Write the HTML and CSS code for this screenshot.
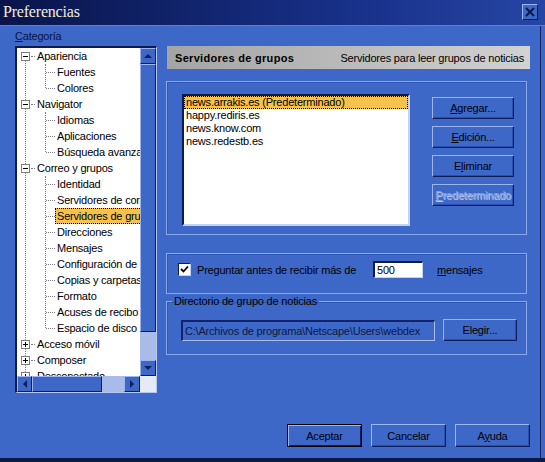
FILE: index.html
```html
<!DOCTYPE html>
<html>
  <head>
    <meta charset="utf-8">
    <title>Preferencias</title>
    <link rel="stylesheet" href="styles.css">
  </head>
  <body>
    <div class="window">
      <!-- Title bar -->
      <div class="titlebar">
        <span class="title">Preferencias</span>
        <span class="close">
          <svg width="10" height="10" viewBox="0 0 10 10"><path d="M1 1 L9 9 M9 1 L1 9" stroke="#0d1848" stroke-width="2"/></svg>
        </span>
      </div>

      <div class="frame">
        <div class="main">
          <!-- Left side: category tree -->
          <div class="categories">
            <div class="cat-label"><u>C</u>ategoría</div>
            <div class="tree-box">
              <div class="tree-view">
                <div class="tree">
                  <div class="node">
                    <div class="row"><span class="exp"></span><span class="label">Apariencia</span></div>
                    <div class="kids">
                      <div class="row"><span class="label">Fuentes</span></div>
                      <div class="row"><span class="label">Colores</span></div>
                    </div>
                  </div>
                  <div class="node">
                    <div class="row"><span class="exp"></span><span class="label">Navigator</span></div>
                    <div class="kids">
                      <div class="row"><span class="label">Idiomas</span></div>
                      <div class="row"><span class="label">Aplicaciones</span></div>
                      <div class="row"><span class="label">Búsqueda avanzada</span></div>
                    </div>
                  </div>
                  <div class="node">
                    <div class="row"><span class="exp"></span><span class="label">Correo y grupos</span></div>
                    <div class="kids">
                      <div class="row"><span class="label">Identidad</span></div>
                      <div class="row"><span class="label">Servidores de correo</span></div>
                      <div class="row"><span class="label selected">Servidores de grupos</span></div>
                      <div class="row"><span class="label">Direcciones</span></div>
                      <div class="row"><span class="label">Mensajes</span></div>
                      <div class="row"><span class="label">Configuración de copia</span></div>
                      <div class="row"><span class="label">Copias y carpetas</span></div>
                      <div class="row"><span class="label">Formato</span></div>
                      <div class="row"><span class="label">Acuses de recibo</span></div>
                      <div class="row"><span class="label">Espacio de disco</span></div>
                    </div>
                  </div>
                  <div class="node">
                    <div class="row"><span class="exp plus"></span><span class="label">Acceso móvil</span></div>
                  </div>
                  <div class="node">
                    <div class="row"><span class="exp plus"></span><span class="label">Composer</span></div>
                  </div>
                  <div class="node">
                    <div class="row"><span class="exp plus"></span><span class="label">Desconectado</span></div>
                  </div>
                </div>
              </div>
              <div class="vscroll">
                <span class="sb-btn up"></span>
                <span class="sb-thumb"></span>
                <span class="sb-track"></span>
                <span class="sb-btn down"></span>
              </div>
              <div class="hscroll">
                <span class="sb-btn left"></span>
                <span class="sb-thumb"></span>
                <span class="sb-track"></span>
                <span class="sb-btn right"></span>
              </div>
              <div class="corner"></div>
            </div>
          </div>

          <!-- Right side: settings panel -->
          <div class="panel">
            <div class="panel-header">
              <b>Servidores de grupos</b>
              <span>Servidores para leer grupos de noticias</span>
            </div>

            <div class="group servers">
              <ul class="listbox">
                <li class="selected">news.arrakis.es (Predeterminado)</li>
                <li>happy.rediris.es</li>
                <li>news.know.com</li>
                <li>news.redestb.es</li>
              </ul>
              <div class="side-buttons">
                <button class="btn"><u>A</u>gregar...</button>
                <button class="btn"><u>E</u>dición...</button>
                <button class="btn">E<u>l</u>iminar</button>
                <button class="btn" disabled><u>P</u>redeterminado</button>
              </div>
            </div>

            <div class="group ask">
              <span class="check">
                <svg width="9" height="9" viewBox="0 0 9 9"><path d="M1 4 L3.5 6.5 L8 1.5" fill="none" stroke="#000" stroke-width="1.8"/></svg>
              </span>
              <span class="ask-text">Preguntar antes de recibir más de</span>
              <input class="count" type="text" value="500">
              <span><u>m</u>ensajes</span>
            </div>

            <fieldset class="group dir">
              <legend>Directorio de grupo de noticias</legend>
              <div class="dir-row">
                <div class="path">C:\Archivos de programa\Netscape\Users\webdex</div>
                <button class="btn choose">Ele<u>g</u>ir...</button>
              </div>
            </fieldset>
          </div>
        </div>

        <!-- Dialog buttons -->
        <div class="footer">
          <button class="btn wide default">Aceptar</button>
          <button class="btn wide">Cancelar</button>
          <button class="btn wide">A<u>y</u>uda</button>
        </div>
      </div>
    </div>
  </body>
</html>
```

FILE: styles.css
```css
:root {
  --face: #3d68c8;
  --light: #9db4ec;
  --dark: #0f1d58;
  --track: #a9bce9;
  --select: #f7c24c;
  --line: #808080;
}

* {
  box-sizing: border-box;
}

body {
  margin: 0;
  background: var(--face);
  font-family: "Liberation Sans", Arial, sans-serif;
  font-size: 11px;
  letter-spacing: -0.2px;
  color: #000;
}

u {
  text-decoration: underline;
}

/* Window chrome */
.window {
  width: 545px;
  height: 462px;
  display: flex;
  flex-direction: column;
  border-bottom: 4px solid #0d1848;
}

.titlebar {
  height: 26px;
  flex: none;
  display: flex;
  align-items: center;
  justify-content: space-between;
  padding: 0 7px 2px 3px;
  background: linear-gradient(to right, #09144a, #18318a 65%, #2645a4);
  border-bottom: 1px solid #5b80d8;
}

.title {
  font-family: "Liberation Serif", "Times New Roman", serif;
  font-size: 16px;
  letter-spacing: -0.2px;
  color: #f3ecdc;
}

.close {
  width: 16px;
  height: 16px;
  display: flex;
  align-items: center;
  justify-content: center;
  background: var(--face);
  border: 1px solid;
  border-color: var(--light) var(--dark) var(--dark) var(--light);
}

.frame {
  flex: 1;
  display: flex;
  flex-direction: column;
  margin-right: 4px;
  border-right: 1px solid #14235e;
}

.main {
  display: flex;
  padding: 4px 0 0 15px;
}

/* Category tree */
.categories {
  width: 142px;
}

.cat-label {
  height: 13px;
  line-height: 13px;
  margin-bottom: 3px;
  color: #0b1440;
}

.tree-box {
  height: 347px;
  display: grid;
  grid-template-columns: 1fr 16px;
  grid-template-rows: 1fr 16px;
  border-style: solid;
  border-width: 2px 1px 1px 2px;
  border-color: #0e1a4c #b8c8f0 #b8c8f0 #0e1a4c;
  background: #fff;
}

.tree-view {
  overflow: hidden;
  background: #fff;
}

.tree {
  position: relative;
}

.tree::before {
  content: "";
  position: absolute;
  left: 8px;
  top: 8px;
  bottom: 0;
  border-left: 1px dotted var(--line);
}

.row {
  position: relative;
  height: 16px;
  line-height: 16px;
  white-space: nowrap;
}

.node > .row {
  padding-left: 18px;
}

.node > .row::after {
  content: "";
  position: absolute;
  left: 14px;
  top: 8px;
  width: 4px;
  border-top: 1px dotted var(--line);
}

.label {
  display: inline-block;
  height: 16px;
  padding: 0 2px;
}

.label.selected {
  background: var(--select);
  outline: 1px dotted #000;
  outline-offset: -1px;
}

.exp {
  position: absolute;
  left: 4px;
  top: 4px;
  width: 9px;
  height: 9px;
  border: 1px solid var(--line);
  background: #fff;
  z-index: 1;
}

.exp::before {
  content: "";
  position: absolute;
  left: 1px;
  top: 3px;
  width: 5px;
  height: 1px;
  background: #000;
}

.exp.plus::after {
  content: "";
  position: absolute;
  left: 3px;
  top: 1px;
  width: 1px;
  height: 5px;
  background: #000;
}

.kids {
  position: relative;
}

.kids::before {
  content: "";
  position: absolute;
  left: 28px;
  top: 0;
  bottom: 8px;
  border-left: 1px dotted var(--line);
}

.kids .row {
  padding-left: 38px;
}

.kids .row::after {
  content: "";
  position: absolute;
  left: 29px;
  top: 8px;
  width: 9px;
  border-top: 1px dotted var(--line);
}

/* Scrollbars */
.vscroll,
.hscroll {
  display: flex;
  background: var(--track);
}

.vscroll {
  flex-direction: column;
}

.sb-btn,
.sb-thumb {
  flex: none;
  background: var(--face);
  border: 1px solid;
  border-color: var(--light) var(--dark) var(--dark) var(--light);
}

.sb-btn {
  width: 16px;
  height: 16px;
  display: flex;
  align-items: center;
  justify-content: center;
}

.sb-btn::before {
  content: "";
  border: 4px solid transparent;
}

.sb-btn.up::before {
  border-top: 0;
  border-bottom-color: var(--dark);
}

.sb-btn.down::before {
  border-bottom: 0;
  border-top-color: var(--dark);
}

.sb-btn.left::before {
  border-left: 0;
  border-right-color: var(--dark);
}

.sb-btn.right::before {
  border-right: 0;
  border-left-color: var(--dark);
}

.vscroll .sb-thumb {
  height: 268px;
}

.hscroll .sb-btn.left {
  width: 15px;
}

.hscroll .sb-thumb {
  width: 70px;
}

.sb-track {
  flex: 1;
}

.corner {
  background: #e4eaf6;
}

/* Settings panel */
.panel {
  width: 364px;
  margin-left: 9px;
  padding-top: 16px;
}

.panel-header {
  height: 23px;
  margin-left: 1px;
  display: flex;
  align-items: center;
  justify-content: space-between;
  padding: 0 6px 0 8px;
  background: linear-gradient(to right, #a4a4a4, #d2d2d2);
}

.panel-header b {
  letter-spacing: 0.3px;
}

.group {
  width: 361px;
  border: 1px solid #88a8ea;
  box-shadow: inset 1px 1px 0 #3057b8;
}

.servers {
  margin-top: 12px;
  height: 154px;
  display: flex;
  padding: 12px 0 0 15px;
}

.listbox {
  width: 228px;
  height: 132px;
  margin: 0;
  padding: 0;
  list-style: none;
  background: #fff;
  border-style: solid;
  border-width: 2px;
  border-color: #0e1a4c #c4d2f2 #c4d2f2 #0e1a4c;
}

.listbox li {
  height: 13px;
  line-height: 13px;
  padding-left: 2px;
}

.listbox li.selected {
  background: var(--select);
  outline: 1px dotted #000;
  outline-offset: -1px;
}

.side-buttons {
  display: flex;
  flex-direction: column;
  gap: 7px;
  margin: 3px 0 0 22px;
}

.btn {
  width: 82px;
  height: 22px;
  padding: 0;
  background: var(--face);
  border: 1px solid;
  border-color: var(--light) var(--dark) var(--dark) var(--light);
  box-shadow: inset -1px -1px 0 #2c4eac;
  font: inherit;
  letter-spacing: inherit;
  color: #000;
  text-align: center;
}

.btn:disabled {
  color: #8ea6e0;
  text-shadow: 1px 1px 0 #b8c8f2;
}

.ask {
  margin-top: 18px;
  height: 41px;
  display: flex;
  align-items: center;
  padding: 0 0 8px 11px;
}

.check {
  width: 13px;
  height: 13px;
  margin-right: 6px;
  display: flex;
  align-items: center;
  justify-content: center;
  background: #fff;
  border-style: solid;
  border-width: 1px;
  border-color: #0e1a4c #c4d2f2 #c4d2f2 #0e1a4c;
}

.ask-text {
  width: 176px;
}

.count {
  width: 50px;
  height: 17px;
  margin: 0 14px 0 0;
  padding: 0 2px;
  font: inherit;
  letter-spacing: inherit;
  background: #fff;
  border-style: solid;
  border-width: 2px 1px 1px 2px;
  border-color: #0e1a4c #c4d2f2 #c4d2f2 #0e1a4c;
  outline: none;
}

.dir {
  margin: 1px 0 0 0;
  padding: 11px 0 13px 14px;
  min-inline-size: 0;
}

.dir legend {
  margin-left: -9px;
  padding: 0 2px;
  line-height: 13px;
}

.dir-row {
  display: flex;
  align-items: center;
}

.path {
  width: 254px;
  height: 21px;
  line-height: 18px;
  padding-left: 2px;
  overflow: hidden;
  white-space: nowrap;
  color: #0d1840;
  background: var(--face);
  border-style: solid;
  border-width: 2px 1px 1px 2px;
  border-color: #13226a #a8bcec #a8bcec #13226a;
}

.btn.choose {
  width: 74px;
  margin-left: 8px;
}

/* Dialog buttons */
.footer {
  margin-top: auto;
  display: flex;
  justify-content: flex-end;
  gap: 9px;
  padding: 0 10px 11px 0;
}

.btn.wide {
  width: 75px;
  height: 23px;
}

.btn.default {
  border-color: #000;
  box-shadow: inset 1px 1px 0 var(--light), inset -1px -1px 0 var(--dark);
}
```
